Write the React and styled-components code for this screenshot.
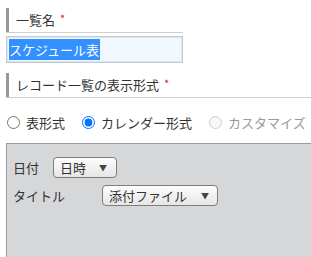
import React from "react";
import styled, { createGlobalStyle } from "styled-components";

const GlobalStyle = createGlobalStyle`
  body {
    margin: 0;
    background: #fff;
    font-family: "Noto Sans CJK JP", "Noto Sans", sans-serif;
    color: #333;
    overflow: hidden;
  }
`;

const Page = styled.div`
  padding: 8px 0 0 6px;
  width: 305px;
`;

const Field = styled.div`
  width: ${(p) => p.width || "auto"};
  border-bottom: 1px solid #cfcfcf;
`;

const Heading = styled.div`
  display: flex;
  align-items: center;
  height: 24px;
  padding-left: 7px;
  border-left: 3px solid #999;
  font-size: 13px;
  line-height: 24px;
  color: #333;
`;

const Required = styled.span`
  color: #e02020;
  font-size: 11px;
  margin-left: 5px;
  position: relative;
  top: -2px;
`;

const TextBox = styled.div`
  box-sizing: border-box;
  margin-top: 3px;
  width: 177px;
  height: 27px;
  padding: 2px 2px;
  border: 1px solid #c6c9cc;
  box-shadow: inset 0 0 0 1px #dbe7ef;
  background: #f0f7ff;
  display: flex;
  align-items: center;
  font-size: 13px;
`;

const Selected = styled.span`
  background: #3390ff;
  color: #fff;
  line-height: 21px;
  height: 21px;
  padding-right: 1px;
`;

const Section = styled.div`
  margin-top: 10px;
`;

const RadioRow = styled.div`
  display: flex;
  align-items: center;
  height: 24px;
  margin-top: 12px;
  margin-left: -6px;
`;

const RadioLabel = styled.label`
  display: flex;
  align-items: center;
  font-size: 13px;
  color: ${(p) => (p.disabled ? "#9a9a9a" : "#333")};
  margin-right: ${(p) => p.gap || 18}px;
  white-space: nowrap;

  input {
    margin: 0 6px 0 7px;
    width: 13px;
    height: 13px;
  }
`;

const Panel = styled.div`
  margin-top: 9px;
  background: #d6d7d9;
  border-top: 1px solid #9b9b9b;
  border-left: 1px solid #9b9b9b;
  height: 115px;
  padding: 13px 0 0 6px;
  box-sizing: border-box;
`;

const PanelRow = styled.div`
  display: flex;
  align-items: center;
  margin-bottom: 7px;
`;

const PanelLabel = styled.span`
  width: ${(p) => p.width}px;
  font-size: 13px;
  color: #333;
`;

const SelectButton = styled.div`
  box-sizing: border-box;
  display: flex;
  align-items: center;
  height: 21px;
  width: ${(p) => p.width}px;
  padding: 0 0 0 6px;
  border: 1px solid #7d7d7d;
  border-radius: 4px;
  background: linear-gradient(#fdfdfd, #e6e6e6);
  font-size: 13px;
  color: #333;
`;

const Arrow = styled.span`
  font-size: 8px;
  color: #444;
  margin-left: ${(p) => p.offset}px;
`;

export default function App() {
  return (
    <>
      <GlobalStyle />
      <Page>
        <Field width="177px">
          <Heading>
            一覧名<Required>*</Required>
          </Heading>
        </Field>
        <TextBox>
          <Selected>スケジュール表</Selected>
        </TextBox>

        <Section>
          <Field>
            <Heading>
              レコード一覧の表示形式<Required>*</Required>
            </Heading>
          </Field>
        </Section>

        <RadioRow>
          <RadioLabel gap={10}>
            <input type="radio" name="view" />
            表形式
          </RadioLabel>
          <RadioLabel gap={10}>
            <input type="radio" name="view" defaultChecked />
            カレンダー形式
          </RadioLabel>
          <RadioLabel disabled>
            <input type="radio" name="view" disabled />
            カスタマイズ
          </RadioLabel>
        </RadioRow>

        <Panel>
          <PanelRow>
            <PanelLabel width={40}>日付</PanelLabel>
            <SelectButton width={64}>
              日時<Arrow offset={13}>▼</Arrow>
            </SelectButton>
          </PanelRow>
          <PanelRow>
            <PanelLabel width={89}>タイトル</PanelLabel>
            <SelectButton width={116}>
              添付ファイル<Arrow offset={14}>▼</Arrow>
            </SelectButton>
          </PanelRow>
        </Panel>
      </Page>
    </>
  );
}
